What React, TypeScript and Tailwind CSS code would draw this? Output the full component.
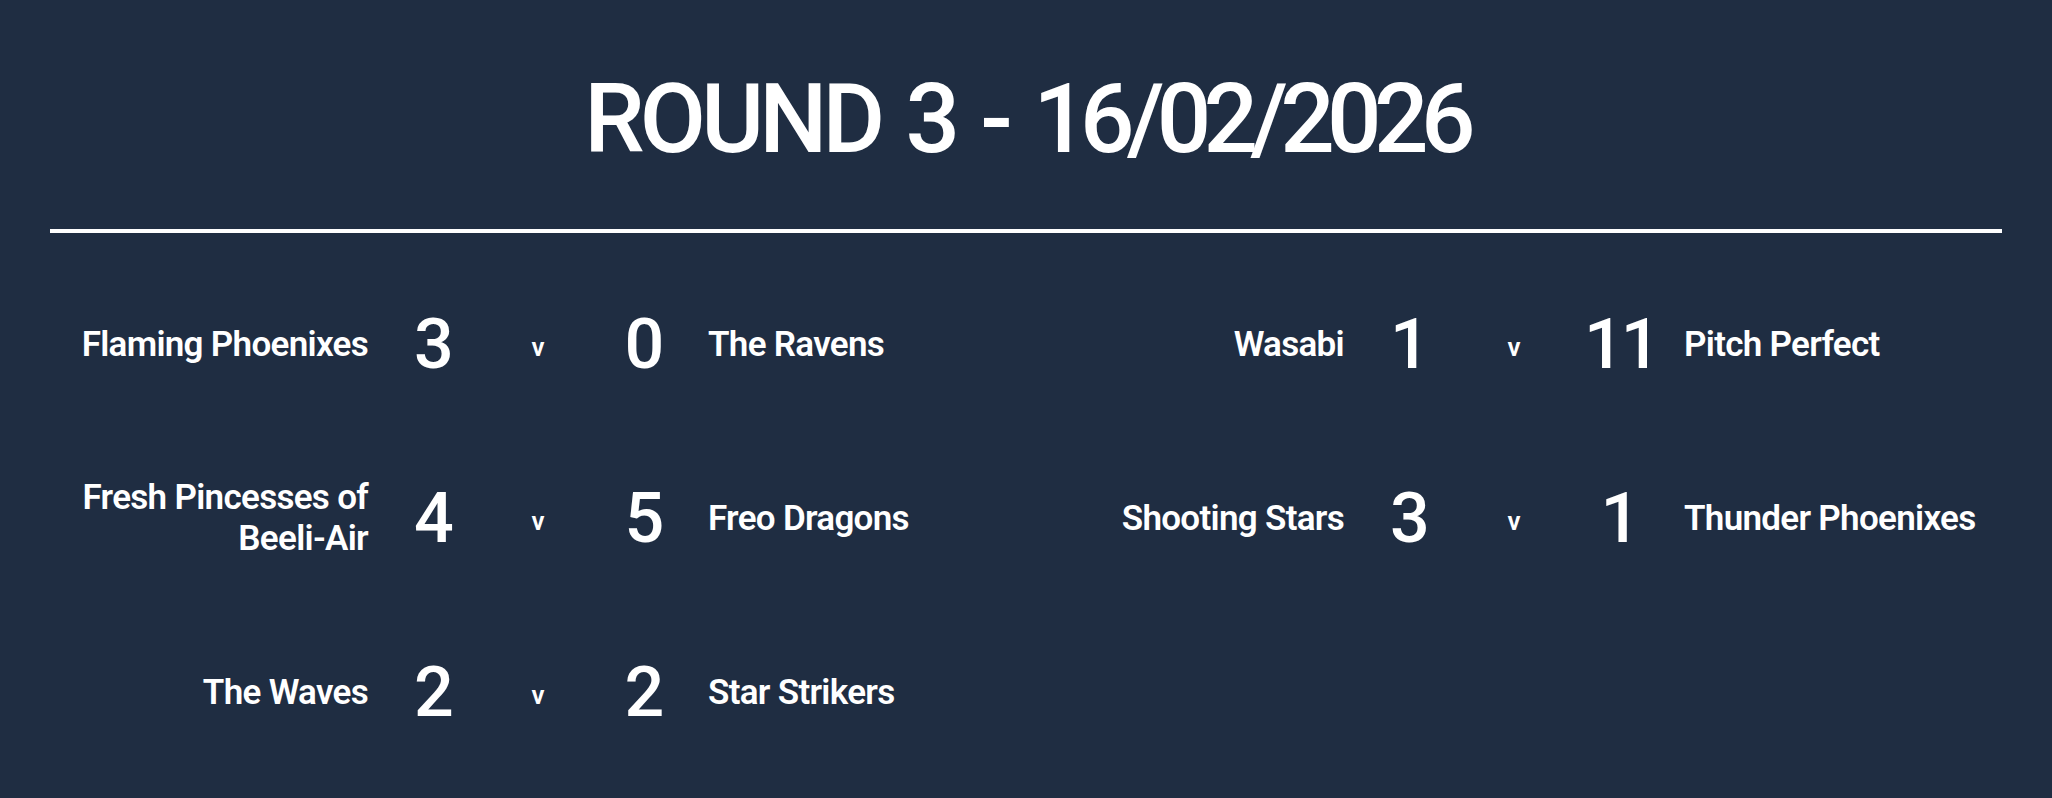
import React from "react"

interface Match {
  home: string
  homeScore: number
  awayScore: number
  away: string
}

const leftMatches: Match[] = [
  { home: "Flaming Phoenixes", homeScore: 3, awayScore: 0, away: "The Ravens" },
  { home: "Fresh Pincesses of Beeli-Air", homeScore: 4, awayScore: 5, away: "Freo Dragons" },
  { home: "The Waves", homeScore: 2, awayScore: 2, away: "Star Strikers" },
]

const rightMatches: Match[] = [
  { home: "Wasabi", homeScore: 1, awayScore: 11, away: "Pitch Perfect" },
  { home: "Shooting Stars", homeScore: 3, awayScore: 1, away: "Thunder Phoenixes" },
]

const MatchRow = ({ m }: { m: Match }) => (
  <div className="grid grid-cols-[1fr_70px_140px_70px_1fr] items-center h-[174px]">
    <span className="pr-[30px] text-right text-[35px] leading-[41px] font-semibold tracking-[-0.7px]">
      {m.home}
    </span>
    <span className="text-center text-[70px] leading-none font-medium tracking-[-2px]">{m.homeScore}</span>
    <span className="text-center text-[26px] leading-none font-semibold mt-[6px]">v</span>
    <span className="text-center text-[70px] leading-none font-medium tracking-[-3px]">{m.awayScore}</span>
    <span className="pl-[30px] text-left text-[35px] leading-[41px] font-semibold tracking-[-0.7px]">
      {m.away}
    </span>
  </div>
)

export default function App() {
  return (
    <div
      className="min-h-screen bg-[#1f2d42] text-white px-[50px]"
      style={{ fontFamily: "Roboto, 'Liberation Sans', sans-serif" }}
    >
      <h1 className="pt-[71px] text-center text-[96px] leading-none font-medium tracking-[-0.05em] [word-spacing:6px]">
        ROUND 3 - <span className="tracking-[-0.08em]">16/02/2026</span>
      </h1>
      <div className="mt-[62px] h-[4px] bg-white" />
      <div className="grid grid-cols-2 pt-[24px]">
        <div className="flex flex-col">
          {leftMatches.map((m, i) => (
            <MatchRow key={i} m={m} />
          ))}
        </div>
        <div className="flex flex-col">
          {rightMatches.map((m, i) => (
            <MatchRow key={i} m={m} />
          ))}
        </div>
      </div>
    </div>
  )
}
